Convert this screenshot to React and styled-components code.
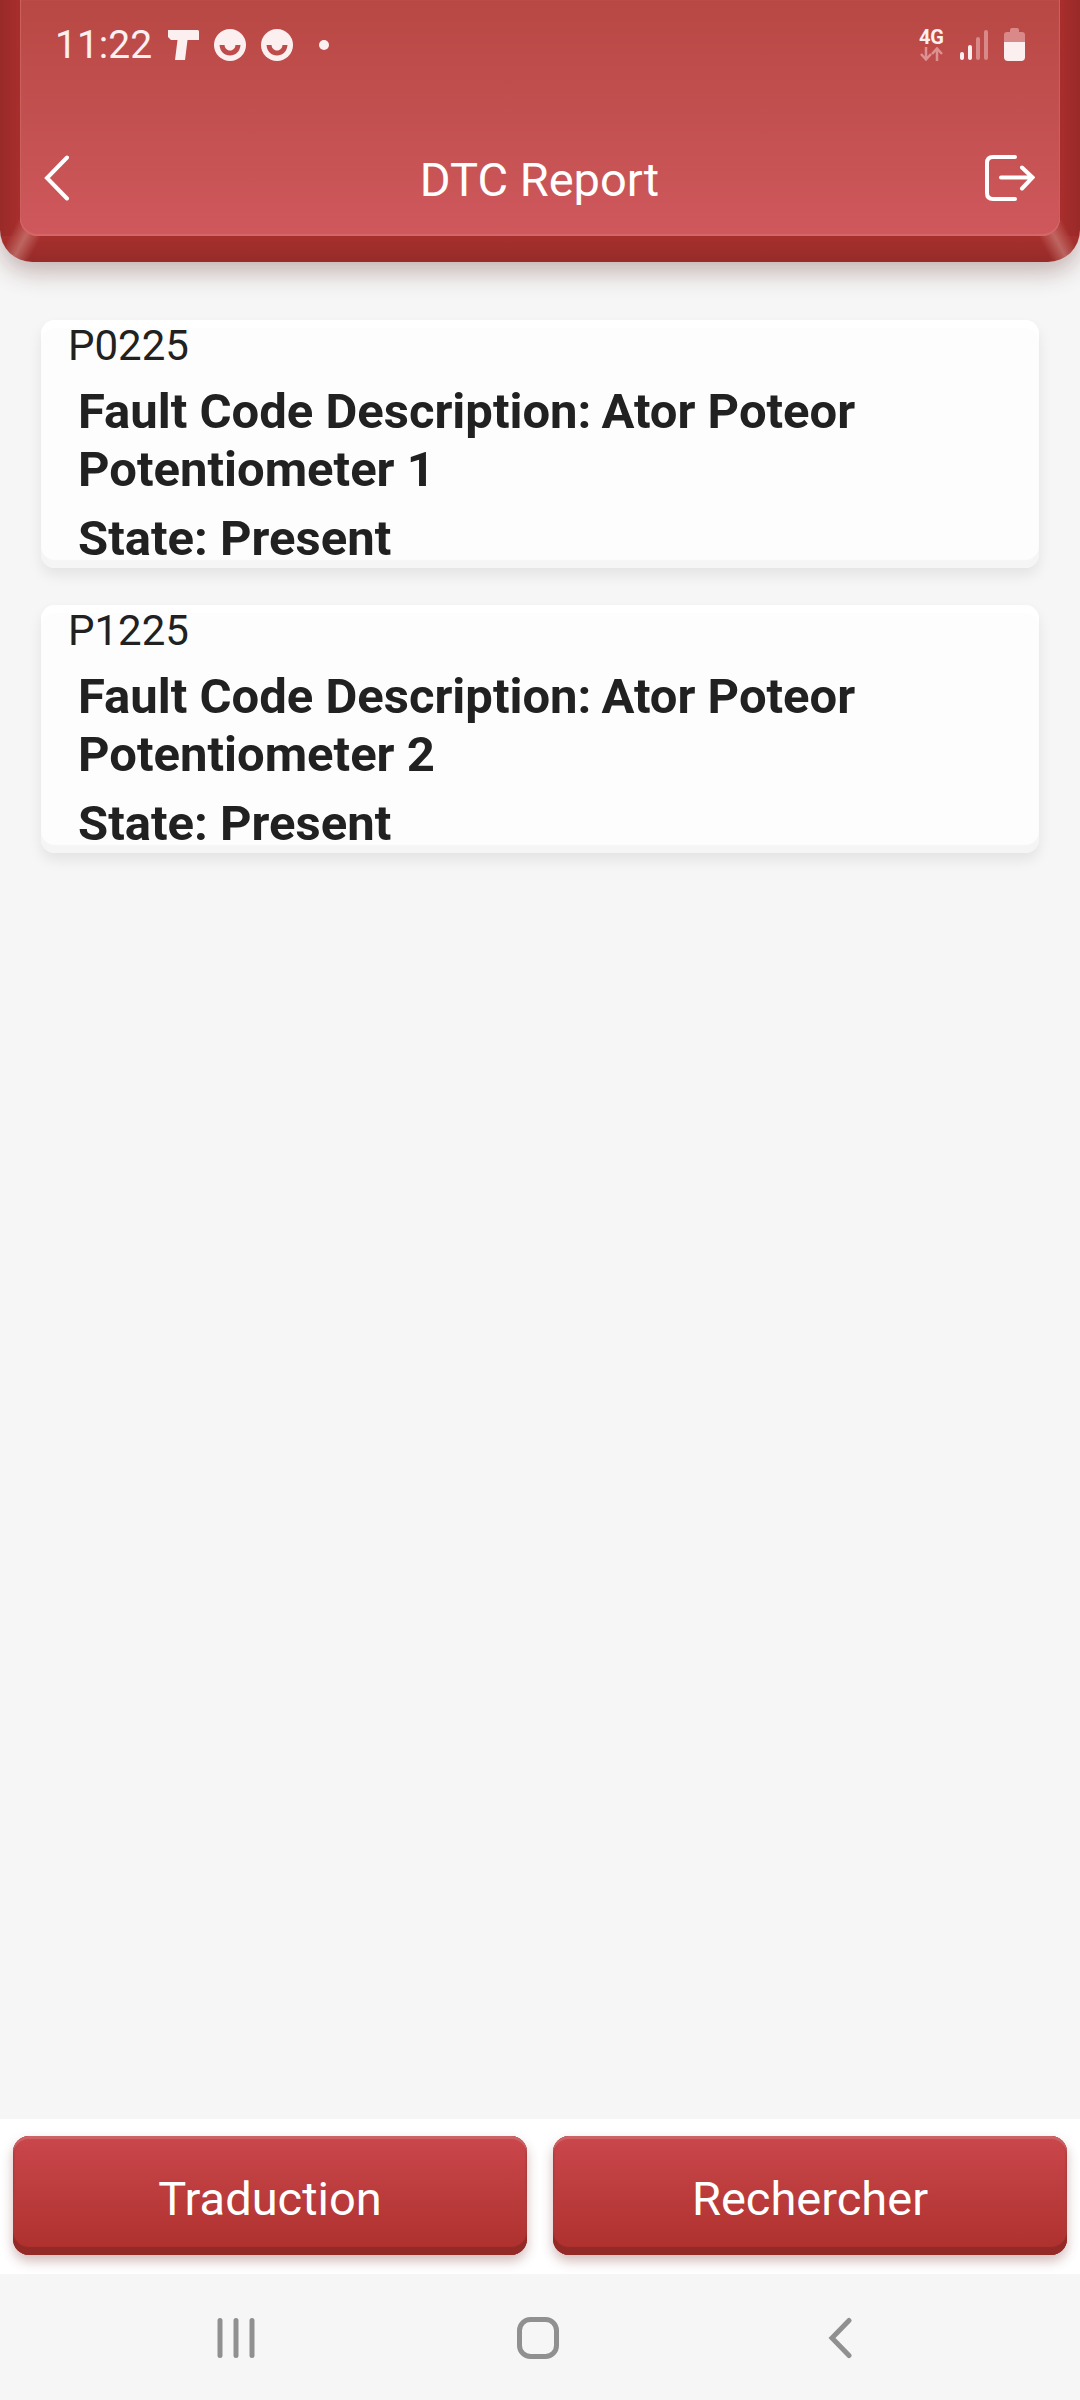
import styled, { createGlobalStyle } from "styled-components";

const FAULTS = [
  { code: 'P0225', description: 'Ator Poteor Potentiometer 1', state: 'Present' },
  { code: 'P1225', description: 'Ator Poteor Potentiometer 2', state: 'Present' },
]

function SmileIcon() {
  return (
    <svg width={32} height={32} viewBox="0 0 32 32" aria-hidden="true">
      <circle cx="16" cy="16" r="16" fill="#fbeff0" />
      <path d="M5.500 16H11.500C12 18.500 13.500 20.500 16 20.500C18.500 20.500 20 18.500 20.500 16H26.500C26 22.500 21.500 26.500 16 26.500C10.500 26.500 6 22.500 5.500 16Z" fill="#be4c4b" />
      <path d="M10.500 15.500H21.500C21.500 19 19 21.500 16 21.500C13 21.500 10.500 19 10.500 15.500Z" fill="#fbeff0" />
    </svg>
  )
}

function StatusIcons() {
  return (
    <Notifications>
      <svg width={31} height={30} viewBox="0 0 31 30" aria-hidden="true">
        <path d="M0 0H30L31 1V10H19.500L17 30H7L9.500 10H3L0 7Z" fill="#fbeff0" />
      </svg>
      <SmileIcon />
      <SmileIcon />
      <Dot />
    </Notifications>
  )
}

function SystemIcons() {
  return (
    <System>
      <Network>
        <NetworkLabel>4G</NetworkLabel>
        <svg width={23} height={14} viewBox="0 0 23 14" fill="none" stroke="#dd9192" strokeWidth="2.500" aria-hidden="true">
          <path d="M6 0V12M1 7L6 12.500L11 7M17 14V2M12 7L17 1.500L22 7" />
        </svg>
      </Network>
      <svg width={28} height={30} viewBox="0 0 28 30" aria-hidden="true">
        <rect x="0" y="22" width="4" height="8" rx="2" fill="#fbeff0" />
        <rect x="8" y="15" width="4" height="15" rx="2" fill="#fbeff0" />
        <rect x="16" y="7" width="4" height="23" rx="2" fill="#d98988" />
        <rect x="24" y="0" width="4" height="30" rx="2" fill="#d98988" />
      </svg>
      <svg width={21} height={33} viewBox="0 0 21 33" aria-hidden="true">
        <path d="M6 4V2Q6 0 8 0H13Q15 0 15 2V4H18Q21 4 21 7V15H0V7Q0 4 3 4Z" fill="#d98988" />
        <path d="M0 14H21V29Q21 33 17 33H4Q0 33 0 29Z" fill="#fbeff0" />
      </svg>
    </System>
  )
}

function FaultCard({ code, description, state }) {
  return (
    <Card>
      <Code>{code}</Code>
      <Detail>{`Fault Code Description:\u2009${description}`}</Detail>
      <Detail>{`State: ${state}`}</Detail>
    </Card>
  )
}

function App() {
  return (
    <Page>
      <GlobalStyle />
      <Header>
        <Face>
          <StatusBar>
            <Clock>11:22</Clock>
            <StatusIcons />
            <SystemIcons />
          </StatusBar>
          <TitleBar>
            <IconButton aria-label="Back">
              <svg width={26} height={46} viewBox="0 0 26 46" fill="none" stroke="#fff" strokeWidth="4" strokeLinecap="round">
                <path d="M23 2.500L3 23L23 43.500" />
              </svg>
            </IconButton>
            <Title>DTC Report</Title>
            <IconButton aria-label="Exit">
              <svg width={50} height={46} viewBox="0 0 50 46" fill="none" stroke="#fff" strokeWidth="4" strokeLinecap="round">
                <path d="M30 2H8Q2 2 2 8V38Q2 44 8 44H30" />
                <path d="M16 22.500H47M37 12.500L47.500 22.500L37 33.500" />
              </svg>
            </IconButton>
          </TitleBar>
        </Face>
      </Header>
      <List>
        {FAULTS.map((fault) => <FaultCard key={fault.code} {...fault} />)}
      </List>
      <Actions>
        <ActionButton>Traduction</ActionButton>
        <ActionButton>Rechercher</ActionButton>
      </Actions>
      <NavBar>
        <NavButton aria-label="Recent apps">
          <svg width={38} height={42} viewBox="0 0 38 42" stroke="#909090" strokeWidth="5" strokeLinecap="round">
            <path d="M3 3.500V38.500M19 3.500V38.500M35 3.500V38.500" />
          </svg>
        </NavButton>
        <NavButton aria-label="Home">
          <svg width={42} height={42} viewBox="0 0 42 42" fill="none" stroke="#909090" strokeWidth="5">
            <rect x="2.500" y="2.500" width="37" height="37" rx="11" />
          </svg>
        </NavButton>
        <NavButton aria-label="Back">
          <svg width={24} height={42} viewBox="0 0 24 42" fill="none" stroke="#909090" strokeWidth="5" strokeLinecap="round">
            <path d="M21 3.500L4 21L21 38.500" />
          </svg>
        </NavButton>
      </NavBar>
    </Page>
  )
}

const GlobalStyle = createGlobalStyle`
  body {
    margin: 0;
    background: #f6f6f6;
    color: #212121;
    font-family: Roboto, sans-serif;
  }

  * {
    box-sizing: border-box;
  }

  button {
    font-family: inherit;
    border: 0;
    padding: 0;
    background: none;
    cursor: pointer;
  }

  svg {
    display: block;
  }
`

const Page = styled.div`
  display: flex;
  flex-direction: column;
  min-height: 100vh;
`;

const Header = styled.header`
  padding: 0 20px 26px;
  border-radius: 0 0 32px 32px;
  /* light streaks on the two bevelled corners, then the bevel itself */
  background:
    linear-gradient(118deg, transparent 28%, rgba(205, 130, 125, 0.65) 52%, transparent 76%) left bottom / 44px 44px no-repeat,
    linear-gradient(-118deg, transparent 28%, rgba(205, 130, 125, 0.65) 52%, transparent 76%) right bottom / 44px 44px no-repeat,
    linear-gradient(#a7302d, #962b29) left bottom / 100% 26px no-repeat,
    linear-gradient(90deg, #982a28, #a82e2c 20px, #a82e2c calc(100% - 20px), #982a28);
  box-shadow: 0 10px 24px rgba(80, 20, 20, 0.3);
`;

const Face = styled.div`
  border-radius: 0 0 18px 18px;
  background: linear-gradient(#b84844, #c35050 50%, #cf585c);
  box-shadow: inset 0 -2px 1px #d5686b, inset 1px 0 1px #cb6260, inset -1px 0 1px #cb6260;
`;

const StatusBar = styled.div`
  display: flex;
  align-items: center;
  height: 89px;
  padding: 0 35px;
`;

const Clock = styled.time`
  font-size: 39px;
  color: #fbeff0;
`;

const Notifications = styled.div`
  display: flex;
  align-items: center;
  gap: 15px;
  margin-left: 16px;
`;

const Dot = styled.span`
  width: 10px;
  height: 10px;
  margin-left: 11px;
  border-radius: 50%;
  background: #fbeff0;
`;

const System = styled.div`
  display: flex;
  align-items: center;
  gap: 16px;
  margin-left: auto;
`;

const Network = styled.div`
  display: flex;
  flex-direction: column;
  align-items: center;
  gap: 2px;
`;

const NetworkLabel = styled.span`
  font-size: 20px;
  font-weight: 700;
  line-height: 16px;
  color: #fbeff0;
`;

const TitleBar = styled.div`
  display: flex;
  align-items: center;
  justify-content: space-between;
  height: 147px;
  padding: 30px 25px 0 24px;
`;

const Title = styled.h1`
  margin: 0;
  padding-top: 4px;
  font-size: 47px;
  font-weight: 400;
  color: #fff;
`;

const IconButton = styled.button`
  display: flex;
  width: 50px;
`;

const List = styled.main`
  flex: 1;
  display: flex;
  flex-direction: column;
  gap: 37px;
  padding: 58px 41px;
`;

const Card = styled.article`
  display: flex;
  flex-direction: column;
  gap: 11px;
  padding: 0 37px;
  border-radius: 14px;
  background: #fdfdfd;
  box-shadow: inset 0 8px 1px #fff, inset 0 -8px 1px #f5f5f5, 0 7px 14px rgba(0, 0, 0, 0.08);
`;

const Code = styled.h2`
  margin: 0 0 0 -10px;
  font-size: 42px;
  font-weight: 400;
  line-height: 52px;
`;

const Detail = styled.p`
  margin: 0;
  font-size: 49px;
  font-weight: 700;
  line-height: 58px;
`;

const Actions = styled.div`
  display: flex;
  gap: 26px;
  padding: 17px 13px 19px;
  background: #fff;
`;

const ActionButton = styled.button`
  && {
    flex: 1;
    height: 119px;
    padding-top: 5px;
    border-radius: 16px;
    background: linear-gradient(#ca474b, #ad302d);
    box-shadow: inset 0 -8px 1px #942a27, inset 0 3px 1px #cb6367, inset 0 0 2px 1px #a63a3b, 0 6px 12px rgba(110, 30, 30, 0.3);
    color: #fff;
    font-size: 47px;
  }
`;

const NavBar = styled.nav`
  display: flex;
  height: 126px;
  padding: 2px 89px 0 85px;
  background: #f6f6f6;
`;

const NavButton = styled.button`
  flex: 1;
  display: flex;
  align-items: center;
  justify-content: center;
`;

export default App;
